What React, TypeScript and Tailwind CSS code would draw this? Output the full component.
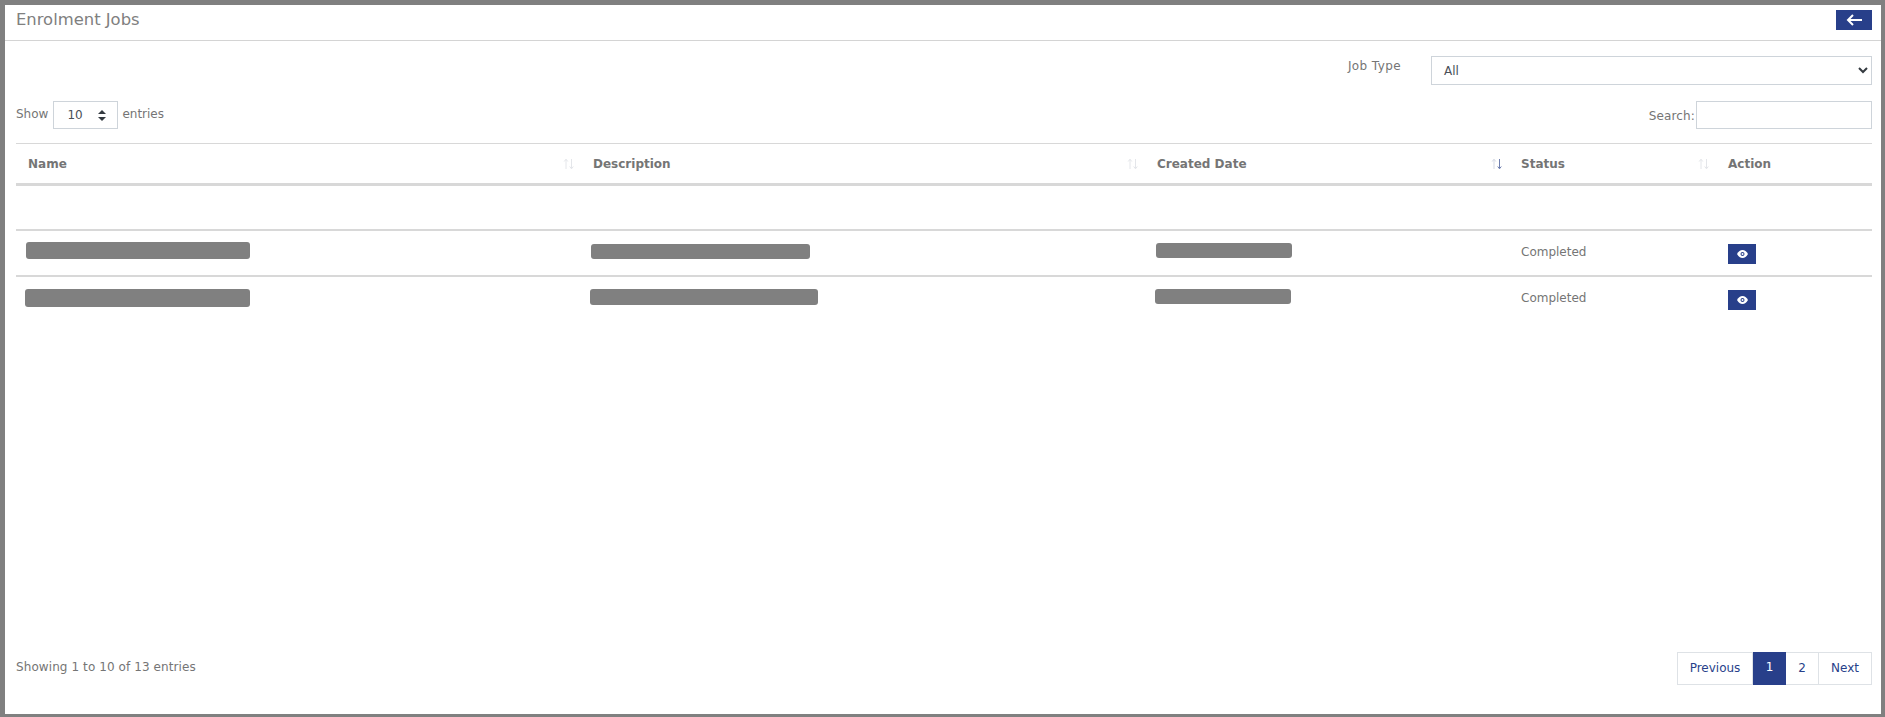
import React from "react";

const SortIcon = ({ up = "#e4e6ea", down = "#e4e6ea" }: { up?: string; down?: string }) => (
  <svg width="12" height="12" viewBox="0 0 12 12" fill="none" className="block">
    <path d="M3 11V1.5M1.2 3.5 3 1.2l1.8 2.3" stroke={up} strokeWidth="1" />
    <path d="M8.5 1v9.5M6.7 8.5l1.8 2.3 1.8-2.3" stroke={down} strokeWidth="1" />
  </svg>
);

const Eye = () => (
  <svg width="11" height="8" viewBox="0 0 11 8">
    <path d="M0 4C1.5 1.3 3.3 0 5.5 0S9.5 1.3 11 4C9.5 6.7 7.700 8 5.500 8S1.500 6.700 0 4Z" fill="#fff" />
    <circle cx="5.500" cy="4" r="2" fill="#283f8a" />
    <circle cx="5.500" cy="4" r="1" fill="#fff" />
  </svg>
);

const Bar = ({ w, h, ml, mt }: { w: string; h: string; ml: string; mt: string }) => (
  <div className={`${w} ${h} ${ml} ${mt} rounded-[3px] bg-[#808080]`} />
);

const Th = ({ label, up, down }: { label: string; up?: string; down?: string }) => (
  <th className="p-0 pl-3 pr-[6px] text-left font-bold">
    <div className="flex items-center justify-between">
      <span>{label}</span>
      {label !== "Action" && <SortIcon up={up} down={down} />}
    </div>
  </th>
);

export default function App() {
  return (
    <div className="h-[717px] border-t-[5px] border-l-[5px] border-r-[4px] border-b-[3px] border-[#808080] bg-white text-[12px] text-[#6c757d] overflow-hidden font-['DejaVu_Sans',sans-serif]">
      <div className="flex h-[36px] items-start justify-between border-b border-[#d4d4d4] pl-[11px] pr-[9px]">
        <div className="text-[16.4px] leading-[24px] text-[#808080] mt-[3px]">Enrolment Jobs</div>
        <button className="mt-[5px] flex h-[20px] w-[36px] items-center justify-center bg-[#283f8a]">
          <svg width="16" height="12" viewBox="0 0 16 12" fill="none">
            <path d="M16 6H2M7 1 2 6l5 5" stroke="#fff" strokeWidth="2" />
          </svg>
        </button>
      </div>

      <div className="mt-[15px] flex h-[29px] items-start justify-end pr-[9px]">
        <span className="mt-[1px] mr-[30px] text-[#757575] leading-[18px] tracking-[0.4px]">Job Type</span>
        <div className="relative h-[29px] w-[441px] border border-[#ced4da] pl-3 pt-[1px] text-[#495057] leading-[27px]">
          All
          <svg className="absolute right-[3px] top-[10px]" width="10" height="7" viewBox="0 0 10 7" fill="none">
            <path d="M1 1l4 4 4-4" stroke="#343a40" strokeWidth="2" />
          </svg>
        </div>
      </div>

      <div className="mt-[15px] flex h-[29px] items-center justify-between pl-[11px] pr-[9px]">
        <div className="flex items-center text-[#757575]">
          <span className="mb-[2px]">Show</span>
          <div className="relative ml-[5px] mr-[4px] h-[28px] w-[65px] border border-[#ced4da] pl-[13px] leading-[26px] text-[#495057]">
            10
            <svg className="absolute right-[11px] top-[8px]" width="8" height="11" viewBox="0 0 8 11">
              <path d="M4 0l4 4H0zM4 11 0 7h8z" fill="#343a40" />
            </svg>
          </div>
          <span className="mb-[2px]">entries</span>
        </div>
        <div className="flex items-center text-[#757575]">
          <span className="mt-[2px] tracking-[0.15px]">Search:</span>
          <div className="ml-[1px] h-[28px] w-[176px] border border-[#ced4da]" />
        </div>
      </div>

      <div className="mt-[14px] pl-[11px] pr-[9px]">
        <table className="w-full table-fixed border-collapse">
          <colgroup>
            <col className="w-[565px]" />
            <col className="w-[564px]" />
            <col className="w-[364px]" />
            <col className="w-[207px]" />
            <col />
          </colgroup>
          <thead>
            <tr className="h-[41px] border-t border-b-[3px] border-[#d8d8d8] text-[#757575]">
              <Th label="Name" />
              <Th label="Description" />
              <Th label="Created Date" down="#6f7fb0" up="#d5d9e4" />
              <Th label="Status" />
              <Th label="Action" />
            </tr>
          </thead>
          <tbody>
            <tr className="h-[45px] border-b-2 border-[#d8d8d8]">
              <td colSpan={5} />
            </tr>
            {[
              { a: ["w-[224px]", "h-[17px]", "ml-[10px]", "mt-[-3px]"], b: ["w-[219px]", "h-[15px]", "ml-[10px]", "mt-[-1px]"], c: ["w-[136px]", "h-[15px]", "ml-[11px]", "mt-[-2px]"] },
              { a: ["w-[225px]", "h-[18px]", "ml-[9px]", "mt-[-2px]"], b: ["w-[228px]", "h-[16px]", "ml-[9px]", "mt-[-2px]"], c: ["w-[136px]", "h-[15px]", "ml-[10px]", "mt-[-2px]"] },
            ].map((r, i) => (
              <tr key={i} className="h-[46px] border-b-2 border-[#d8d8d8] last:border-b-0 align-top">
                <td className="pt-[14px]"><Bar w={r.a[0]} h={r.a[1]} ml={r.a[2]} mt={r.a[3]} /></td>
                <td className="pt-[14px]"><Bar w={r.b[0]} h={r.b[1]} ml={r.b[2]} mt={r.b[3]} /></td>
                <td className="pt-[14px]"><Bar w={r.c[0]} h={r.c[1]} ml={r.c[2]} mt={r.c[3]} /></td>
                <td className="pl-3 pt-[12px] leading-[18px] text-[#757575]">Completed</td>
                <td className="pl-3 pt-[13px]">
                  <button className="flex h-[20px] w-[28px] items-center justify-center bg-[#283f8a]"><Eye /></button>
                </td>
              </tr>
            ))}
          </tbody>
        </table>
      </div>

      <div className="mt-[330px] flex items-start justify-between pl-[11px] pr-[9px]">
        <div className="mt-[6px] leading-[18px] text-[#757575] tracking-[0.09px]">Showing 1 to 10 of 13 entries</div>
        <div className="flex h-[33px] text-[#283f8a] leading-[31px]">
          <span className="w-[76px] border border-[#dee2e6] text-center">Previous</span>
          <span className="w-[33px] bg-[#283f8a] text-center text-white">1</span>
          <span className="w-[33px] border-y border-r border-[#dee2e6] text-center">2</span>
          <span className="w-[53px] border-y border-r border-[#dee2e6] text-center">Next</span>
        </div>
      </div>
    </div>
  );
}
